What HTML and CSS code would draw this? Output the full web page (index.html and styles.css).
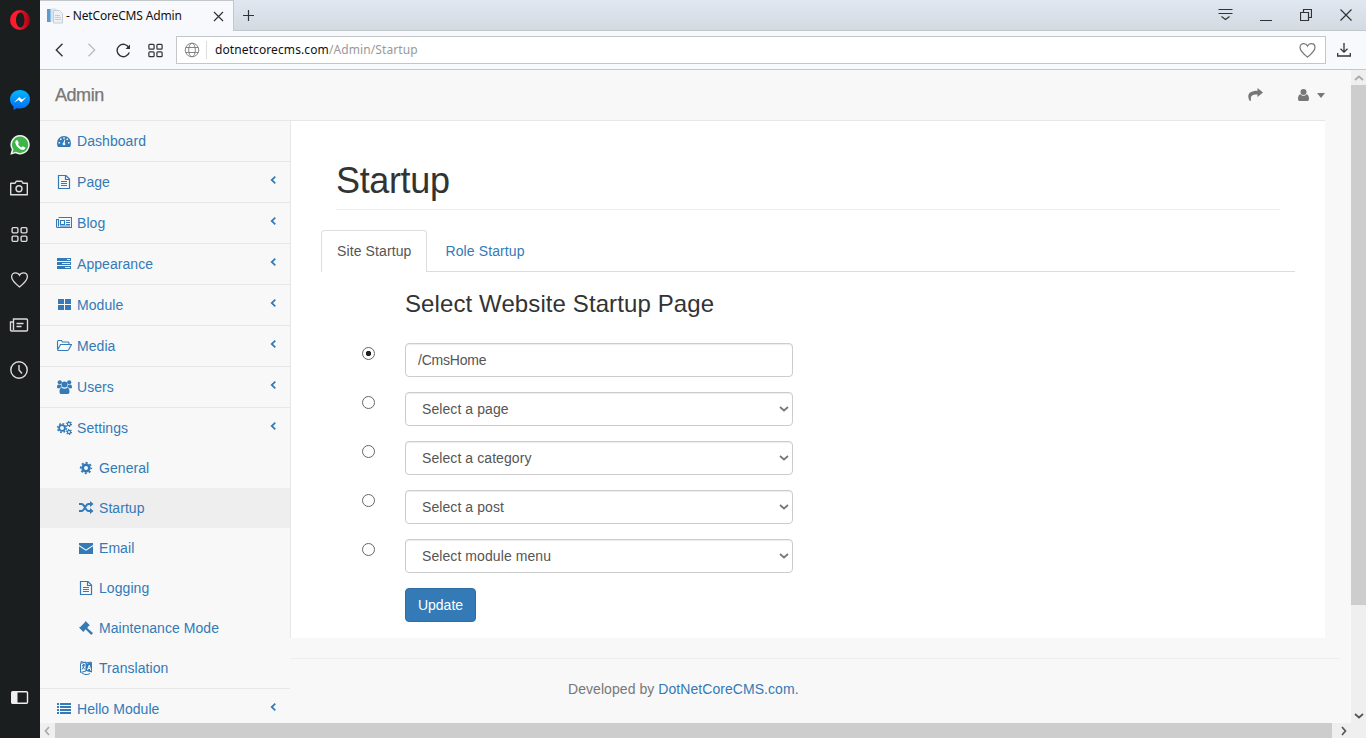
FILE: index.html
```html
<!DOCTYPE html>
<html lang="en">
<head>
<meta charset="utf-8">
<title>- NetCoreCMS Admin</title>
<link rel="stylesheet" href="styles.css">
</head>
<body>
<svg class="defs" width="0" height="0">
  <symbol id="file" viewBox="0 0 16 16"><path d="M2.500 1.500h7.500l3.500 3.500v9.500h-11zM9.500 1.500v4h4" fill="none" stroke="currentColor" stroke-width="1.200"/><path d="M5 7.500h6M5 9.500h6M5 11.500h6" stroke="currentColor"/></symbol>
  <symbol id="grid" viewBox="0 0 18 18"><g fill="none" stroke="currentColor" stroke-width="1.300"><rect x="2" y="2.500" width="5.500" height="5" rx="1"/><rect x="10.500" y="2.500" width="5.500" height="5" rx="1"/><rect x="2" y="10.500" width="5.500" height="5" rx="1"/><rect x="10.500" y="10.500" width="5.500" height="5" rx="1"/></g></symbol>
  <symbol id="heart" viewBox="0 0 18 18"><path d="M9 16C5.500 13.200 1.100 9.600 1.100 5.800C1.100 3.300 2.800 1.800 5 1.800C6.800 1.800 8.300 2.800 9 4.300C9.700 2.800 11.200 1.800 13 1.800C15.200 1.800 16.900 3.300 16.900 5.800C16.900 9.600 12.500 13.200 9 16z" fill="none" stroke="currentColor" stroke-width="1.300"/></symbol>
  <symbol id="chev" viewBox="0 0 6 8"><path d="M5.300.7L1.700 4l3.600 3.300" fill="none" stroke="currentColor" stroke-width="1.700"/></symbol>
  <symbol id="down" viewBox="0 0 10 6"><path d="M1 1l4 3.500L9 1" fill="none" stroke="currentColor" stroke-width="1.700"/></symbol>
</svg>
<div class="browser">
  <aside class="rail">
    <svg class="r-opera" width="20" height="20" viewBox="0 0 20 20"><defs><linearGradient id="og" x2="1"><stop offset=".4" stop-color="#ff1b2d"/><stop offset="1" stop-color="#a70014"/></linearGradient><linearGradient id="mg" x2="0" y2="1"><stop stop-color="#00b8ff"/><stop offset="1" stop-color="#0568f5"/></linearGradient></defs><path fill="url(#og)" fill-rule="evenodd" d="M10 0a10 10 0 100 20a10 10 0 000-20zM10.500 2.500c2.400 0 4 3.200 4 7.500s-1.600 7.500-4 7.500s-4.500-3.200-4.500-7.500s2.100-7.500 4.500-7.500z"/></svg>
    <svg class="r-mess" width="20" height="20" viewBox="0 0 20 20"><path fill="url(#mg)" d="M10 0C4.300 0 0 4.200 0 9.300c0 3 1.300 5.400 3.500 7.200V20l3.300-1.800c1 .3 2.100.4 3.200.4c5.700 0 10-4.200 10-9.300S15.700 0 10 0z"/><path fill="#fff" d="M4 12.500l5.200-5.600 2.700 2.700 4.500-2.500-5 5.500-2.800-2.700z"/></svg>
    <svg class="r-wa" width="20" height="20" viewBox="0 0 20 20"><path fill="#f2f5f2" d="M10.200 0a9.700 9.700 0 00-8.400 14.600L.3 19.800l5.200-1.500A9.700 9.700 0 1010.200 0z"/><path fill="#3db54a" d="M10.200 1.500a8.200 8.200 0 00-6.700 12.900l-1 3.300 3.400-.9A8.200 8.200 0 1010.200 1.500z"/><path fill="#fff" d="M7.200 5c-.7-.2-1.900.8-1.900 2.200 0 3.400 4.300 7.600 7.600 7.600 1.300 0 2.300-.9 2.400-2.300l-2.600-1.300-1.200 1.300c-1.700-.7-2.900-1.900-3.500-3.400l.9-1.200z"/></svg>
    <svg class="r-cam" width="20" height="18" viewBox="0 0 20 18"><path d="M1.700 4.300h4.200l1.300-2h5.600l1.300 2h4.200v11.400h-16.600z" fill="none" stroke="#ddd" stroke-width="1.400" stroke-linejoin="round"/><circle cx="10" cy="9.700" r="3" fill="none" stroke="#ddd" stroke-width="1.400"/></svg>
    <svg class="r-grid" width="19" height="19"><use href="#grid"/></svg>
    <svg class="r-heart" width="19" height="18"><use href="#heart"/></svg>
    <svg class="r-news" width="20" height="16" viewBox="0 0 20 16"><path d="M4.500 2h13q1 0 1 1v10q0 1-1 1h-15q-1 0-1-1V5h3zM4.500 5v8" fill="none" stroke="#ddd" stroke-width="1.400"/><path d="M7.500 6.500h7M7.500 9.500h5" stroke="#ddd" stroke-width="1.400"/></svg>
    <svg class="r-clock" width="20" height="20" viewBox="0 0 20 20"><circle cx="10" cy="10" r="8.200" fill="none" stroke="#ddd" stroke-width="1.400"/><path d="M10 5v5l3 3.500" fill="none" stroke="#ddd" stroke-width="1.400"/></svg>
    <svg class="r-panel" width="19" height="15" viewBox="0 0 19 15"><rect x="1.700" y="1.700" width="15.800" height="11.600" rx="1" fill="none" stroke="#eee" stroke-width="1.400"/><path d="M2 2h5.500v11H2z" fill="#eee"/></svg>
  </aside>
  <div class="window">
    <header class="tabs-bar">
      <div class="tab">
        <svg width="16" height="16" viewBox="0 0 16 16"><path d="M0 1h4v13H0z" fill="#5b9ccf"/><path d="M3.500.5h6v13h-6z" fill="#d5e5f1"/><path d="M6.500 2.500h6l3 3v9.500h-9z" fill="#edf1f4" stroke="#c6ced5"/><path d="M8 7.500h5M8 9.500h6M8 11.500h6" stroke="#c3cdd5"/></svg>
        <span class="tab-title">- NetCoreCMS Admin</span>
        <svg class="tab-x" width="11" height="11" viewBox="0 0 11 11"><path d="M1 1l9 9M10 1l-9 9" stroke="#333" stroke-width="1.200"/></svg>
      </div>
      <svg class="plus" width="11" height="11" viewBox="0 0 11 11"><path d="M5.500 0v11M0 5.500h11" stroke="#333" stroke-width="1.200"/></svg>
      <div class="win-controls">
        <svg width="15" height="14" viewBox="0 0 15 14"><path d="M.5 1.500h14M.5 5.500h14M3.500 8.500l4 3 4-3" fill="none" stroke="#333" stroke-width="1.200"/></svg>
        <svg width="12" height="14" viewBox="0 0 12 14"><path d="M0 12.500h12" stroke="#333"/></svg>
        <svg width="12" height="14" viewBox="0 0 12 14"><path d="M.5 4.500h8v8h-8zM3.500 4v-2.500h8v8H9" fill="none" stroke="#333" stroke-width="1.200"/></svg>
        <svg width="12" height="14" viewBox="0 0 12 14"><path d="M.5 1.500l11 11M11.500 1.500l-11 11" stroke="#333" stroke-width="1.200"/></svg>
      </div>
    </header>
    <nav class="toolbar">
      <svg class="t-back" width="9" height="14" viewBox="0 0 9 14"><path d="M7.500.8L1.300 7l6.200 6.200" fill="none" stroke="#333" stroke-width="1.400"/></svg>
      <svg class="t-fwd" width="9" height="14" viewBox="0 0 9 14"><path d="M1.500.8L7.700 7l-6.200 6.200" fill="none" stroke="#bbb" stroke-width="1.300"/></svg>
      <svg class="t-load" width="15" height="15" viewBox="0 0 15 15"><path d="M12.800 4.600A6.200 6.200 0 1013.200 9.500" fill="none" stroke="#333" stroke-width="1.400"/><path d="M14 1.500v4.500H9.500z" fill="#333"/></svg>
      <svg class="t-grid" width="17" height="17"><use href="#grid"/></svg>
      <div class="address">
        <svg width="16" height="16" viewBox="0 0 16 16" fill="none" stroke="#858585"><circle cx="8" cy="8" r="6.800"/><ellipse cx="8" cy="8" rx="3.300" ry="6.800"/><path d="M1.800 5.500h12.400M1.800 10.500h12.400"/></svg>
        <span class="url">dotnetcorecms.com<i>/Admin/Startup</i></span>
        <svg class="fav" width="17" height="17"><use href="#heart"/></svg>
      </div>
      <svg class="t-dl" width="14" height="14" viewBox="0 0 14 14"><path d="M7 0v9M3.500 5.800L7 9.200l3.500-3.400M.7 10v3h12.600v-3" fill="none" stroke="#333" stroke-width="1.300"/></svg>
    </nav>
    <div class="view">
      <div class="page">
        <div class="navbar"><b class="brand">Admin</b>
          <svg class="share" width="15" height="13" viewBox="0 0 15 13"><path fill="#777" d="M9.500 0l5.500 4.500L9.500 9V6.500C4.500 6.300 2.300 7.500 3 12.800H1.500C-1.500 6.800 1 2.700 9.500 2.700z"/></svg>
          <svg class="user" width="11" height="12" viewBox="0 0 11 12"><circle cx="5.500" cy="3" r="3" fill="#777"/><path fill="#777" d="M2.500 5.200c2 2.200 4 2.200 6 0C10.400 5.700 11 7.500 11 10c0 1.200-.6 2-1.700 2H1.700C.6 12 0 11.200 0 10c0-2.500.6-4.300 2.500-4.800z"/></svg>
          <span class="caret"></span>
        </div>
        <div class="columns">
          <ul class="menu">
            <li><svg class="ic" viewBox="0 0 16 16"><path fill="currentColor" fill-rule="evenodd" d="M8 3a7 7 0 00-7 7c0 1.500.3 2.800.9 4h12.200c.6-1.200.9-2.500.9-4a7 7 0 00-7-7zM7.200 4.300h1.600v1.500H7.200zM4 5.500h1.600V7H4zM10.500 5.500h1.600V7h-1.600zM2.500 9h1.600v1.500H2.500zM12 9h1.600v1.500H12zM8.500 6.500l.8.300-.6 2.900c1 .6 1 2.600-.7 2.600s-2-2-.6-2.700z"/></svg>Dashboard</li>
            <li><svg class="ic"><use href="#file"/></svg>Page<svg class="ar"><use href="#chev"/></svg></li>
            <li><svg class="ic" viewBox="0 0 16 16"><path d="M2.500 2.500h13v10h-14q-1 0-1-1v-7h2v7M4.500 5.500h4v4h-4zM10 5.500h4M10 7.500h4M10 9.500h4M4 11h10" fill="none" stroke="currentColor" stroke-width="1.100"/></svg>Blog<svg class="ar"><use href="#chev"/></svg></li>
            <li><svg class="ic" viewBox="0 0 16 16"><path fill="currentColor" d="M1 2h14v3H1zM1 6h14v3H1zM1 10h14v3H1z"/><path stroke="#f8f8f8" stroke-width=".9" d="M11 3.500h3M6 7.500h8M9 11.500h5"/></svg>Appearance<svg class="ar"><use href="#chev"/></svg></li>
            <li><svg class="ic" viewBox="0 0 16 16"><path fill="currentColor" d="M2 2h6v5H2zM9 2h6v5H9zM2 8h6v5H2zM9 8h6v5H9z"/></svg>Module<svg class="ar"><use href="#chev"/></svg></li>
            <li><svg class="ic" viewBox="0 0 16 16"><path d="M1.500 11V3.500q0-1 1-1h3l1 1.500h5.500q1 0 1 1v1.500M1.500 12l3-5.500h11l-2.700 5q-.6 1-1.800 1H2.500q-1 0-1-1" fill="none" stroke="currentColor" stroke-width="1.100"/></svg>Media<svg class="ar"><use href="#chev"/></svg></li>
            <li><svg class="ic" viewBox="0 0 16 16" fill="currentColor"><circle cx="3.800" cy="3.300" r="2.100"/><circle cx="13.200" cy="3.300" r="2.100"/><circle cx="8.500" cy="5.500" r="3"/><path d="M1 9c0-2.400.6-3.500 1.500-3.500.8.500 1.600.6 2.400.3.100 1.200.5 2 1.200 2.700H4.500L3 9.500zM16 9c0-2.400-.6-3.500-1.500-3.500-.8.500-1.600.6-2.400.3-.1 1.200-.5 2-1.200 2.700h1.600L14 9.500zM5.500 8.700c2 1.400 4 1.400 6 0 1.700.5 2 2.200 2 4 0 1.500-.8 2.300-2 2.300H5.500c-1.200 0-2-.8-2-2.300 0-1.800.3-3.500 2-4z"/></svg>Users<svg class="ar"><use href="#chev"/></svg></li>
            <li class="open"><svg class="ic" viewBox="0 0 16 16" fill="none" stroke="currentColor"><circle cx="6" cy="8" r="2.900" stroke-width="1.800"/><circle cx="6" cy="8" r="4.400" stroke-width="1.500" stroke-dasharray="1.730 1.730"/><circle cx="13" cy="4" r="1.600" stroke-width="1.200"/><circle cx="13" cy="4" r="2.500" stroke-width="1.200" stroke-dasharray="1.200 1.420"/><circle cx="13" cy="12" r="1.600" stroke-width="1.200"/><circle cx="13" cy="12" r="2.500" stroke-width="1.200" stroke-dasharray="1.200 1.420"/></svg>Settings<svg class="ar"><use href="#chev"/></svg></li>
            <li class="sub"><svg class="ic" viewBox="0 0 16 16" fill="none" stroke="currentColor"><circle cx="8" cy="8" r="3.300" stroke-width="2.600"/><circle cx="8" cy="8" r="5.200" stroke-width="1.900" stroke-dasharray="2.042 2.042" stroke-dashoffset="1"/></svg>General</li>
            <li class="sub active"><svg class="ic" viewBox="0 0 16 16"><path d="M1 4h2.500C7 4 7 11 10.500 11H13M1 11h2.500C7 11 7 4 10.500 4H13" fill="none" stroke="currentColor" stroke-width="1.900"/><path fill="currentColor" d="M12 1l3.500 3L12 7zM12 8l3.500 3L12 14z"/></svg>Startup</li>
            <li class="sub"><svg class="ic" viewBox="0 0 16 16"><path fill="currentColor" d="M1 3h14v2L8 9.500 1 5zM1 6.300l7 4.500 7-4.500V14H1z"/></svg>Email</li>
            <li class="sub"><svg class="ic"><use href="#file"/></svg>Logging</li>
            <li class="sub"><svg class="ic" viewBox="0 0 16 16"><path fill="currentColor" d="M7.500 1l4.300 4.300-1.400.9-1.200 1.700 5.800 5-1.800 2.100-5.700-5.700-1 1.500L5.300 12 1 7.500l1.500-.8 4-4z"/></svg>Maintenance Mode</li>
            <li class="sub"><svg class="ic" viewBox="0 0 16 16"><path d="M2.500 3.500L8 2v9l-5.500 1.500z" fill="none" stroke="currentColor"/><path fill="currentColor" d="M8 4l6-2v10.500L8 11z"/><path d="M4 5.500l3-.8M5.500 4v2M6.500 5.500L4 9.500M4.500 6.500l2.500 3" stroke="currentColor" fill="none"/><path d="M9.500 10l1.800-5 1.500 5.600M10 8.500h2" stroke="#fff" fill="none"/><path d="M4 13c3 2 5 2 8 .5M3 3V1.500L8 3l5-1" fill="none" stroke="currentColor"/></svg>Translation</li>
            <li class="last"><svg class="ic" viewBox="0 0 16 16"><path fill="currentColor" d="M1 2h2v2H1zM4 2h11v2H4zM1 5h2v2H1zM4 5h11v2H4zM1 8h2v2H1zM4 8h11v2H4zM1 11h2v2H1zM4 11h11v2H4z"/></svg>Hello Module<svg class="ar"><use href="#chev"/></svg></li>
          </ul>
          <div class="right">
            <main class="content">
              <h1>Startup</h1>
              <div class="tabs"><span class="on">Site Startup</span><span>Role Startup</span></div>
              <form class="form">
                <h3>Select Website Startup Page</h3>
                <div class="row"><input type="radio" name="s" checked><input class="field path" type="text" value="/CmsHome"></div>
                <div class="row"><input type="radio" name="s"><div class="pick"><select class="field"><option>Select a page</option></select><svg><use href="#down"/></svg></div></div>
                <div class="row"><input type="radio" name="s"><div class="pick"><select class="field"><option>Select a category</option></select><svg><use href="#down"/></svg></div></div>
                <div class="row"><input type="radio" name="s"><div class="pick"><select class="field"><option>Select a post</option></select><svg><use href="#down"/></svg></div></div>
                <div class="row"><input type="radio" name="s"><div class="pick"><select class="field"><option>Select module menu</option></select><svg><use href="#down"/></svg></div></div>
                <button type="button">Update</button>
              </form>
            </main>
            <footer>Developed by <a>DotNetCoreCMS.com.</a></footer>
          </div>
        </div>
      </div>
      <div class="vbar"><svg class="up" width="10" height="6"><use href="#down"/></svg><div class="vthumb"></div><svg width="10" height="6"><use href="#down"/></svg></div>
    </div>
    <div class="hbar"><svg class="lt" width="10" height="6"><use href="#down"/></svg><div class="hthumb"></div><svg class="rt" width="10" height="6"><use href="#down"/></svg></div>
  </div>
</div>
</body>
</html>
```
FILE: styles.css
```css
* { box-sizing: border-box; }
body { margin: 0; font: 14px/20px "Liberation Sans", Arial, sans-serif; color: #333; overflow: hidden; }
svg { display: block; flex: none; }
.defs { position: absolute; }
.browser { display: flex; width: 1366px; height: 738px; }

.rail { width: 40px; background: #1b1e1f; color: #ddd; display: flex; flex-direction: column; align-items: flex-start; padding: 10px 0 33px 10px; }
.r-mess { margin-top: 60px; }
.r-wa { margin-top: 25px; }
.r-cam { margin: 24px 0 0 -1px; }
.r-grid { margin-top: 28px; }
.r-heart { margin: 27px 0 0 0; }
.r-news { margin: 28px 0 0 -1px; }
.r-clock { margin: 27px 0 0 -1px; }
.r-panel { margin-top: auto; }

.window { flex: 1; min-width: 0; display: flex; flex-direction: column; }
.tabs-bar { height: 31px; display: flex; background: linear-gradient(#e0e7f0, #d3dae2); border-bottom: 1px solid #c4c7ca; }
.tab { width: 194px; height: 31px; display: flex; align-items: center; padding: 0 9px 0 7px; background: #f8f9fc; border-top: 1px solid #c4c7ca; border-right: 1px solid #c4c7ca; }
.tab-title { font: 12px/16px "Noto Sans", sans-serif; letter-spacing: -.15px; color: #111; margin-left: 3px; white-space: nowrap; }
.tab-x { margin-left: auto; }
.plus { margin: 10px 0 0 9px; }
.win-controls { margin: 8px 14px 0 auto; display: flex; gap: 28px; }
.win-controls svg:first-child { margin-right: -1px; }

.toolbar { height: 39px; background: #f8f9fc; border-bottom: 1px solid #c4c7ca; display: flex; align-items: center; padding: 0 15px; color: #333; }
.t-fwd { margin-left: 23px; }
.t-load { margin-left: 20px; }
.t-grid { margin-left: 16px; }
.address { flex: 1; height: 28px; margin: 0 11px 0 12px; background: #fff; border: 1px solid #c4c7ca; display: flex; align-items: center; padding: 0 9px 0 7px; }
.url { font: 12px/18px "Noto Sans", sans-serif; color: #111; margin-left: 6px; padding-left: 8px; border-left: 1px solid #ddd; letter-spacing: .1px; }
.url i { font-style: normal; color: #999; }
.fav { margin-left: auto; color: #777; }

.view { height: 653px; display: flex; overflow: hidden; }
.page { width: 1311px; height: 653px; overflow: hidden; background: #f8f8f8; letter-spacing: .06px; }
.navbar { width: 1285px; height: 51px; border-bottom: 1px solid #e7e7e7; display: flex; align-items: center; padding-left: 15px; }
.brand { font-size: 18px; font-weight: 400; color: #777; letter-spacing: -.45px; -webkit-text-stroke: .25px #777; }
.share { margin: 0 0 2px auto; }
.user { margin-left: 35px; }
.caret { border: 4px solid transparent; border-top: 5px solid #777; border-bottom: 0; margin: 0 0 0 8px; }
.columns { display: flex; }

.menu { list-style: none; margin: 0; padding: 0; width: 250px; color: #337ab7; }
.menu li { height: 41px; border-bottom: 1px solid #e7e7e7; display: flex; align-items: center; padding: 0 14px 0 16px; }
.menu .open { height: 40px; border: 0; }
.menu .sub { height: 40px; border: 0; padding-left: 38px; }
.menu .active { background: #eee; }
.menu .last { border-top: 1px solid #e7e7e7; height: 42px; }
.ic { width: 16px; height: 16px; margin-right: 5px; }
.ar { width: 6px; height: 8px; margin: 0 0 5px auto; }

.right { width: 1050px; }
.content { width: 1035px; height: 517px; background: #fff; border-left: 1px solid #e7e7e7; padding: 40px 30px 0; }
h1 { margin: 0 15px 20px; padding-left: 0; height: 49px; border-bottom: 1px solid #eee; font: 36px/40px "Liberation Sans", Arial, sans-serif; letter-spacing: -.35px; }
.tabs { display: flex; gap: 2px; height: 42px; border-bottom: 1px solid #ddd; }
.tabs span { height: 42px; padding: 11px 15px; line-height: 20px; color: #337ab7; border: solid transparent; border-width: 0 1px; letter-spacing: .11px; }
.tabs .on { border: 1px solid #ddd; border-bottom: 0; border-radius: 4px 4px 0 0; background: #fff; color: #555; padding-top: 10px; }
.form { padding-left: 41px; }
h3 { font: 24px/26px "Liberation Sans", Arial, sans-serif; margin: 19px 0 26px 43px; letter-spacing: .1px; }
.row { display: flex; gap: 30px; height: 34px; margin-bottom: 15px; }
.row input[type=radio] { appearance: none; width: 13px; height: 13px; margin: 4px 0 0; border: 1px solid #666; border-radius: 50%; }
.row input[type=radio]:checked { background: radial-gradient(circle, #222 2.300px, transparent 3px); }
.field { appearance: none; display: block; width: 388px; height: 34px; padding: 6px 12px; font: inherit; letter-spacing: .08px; color: #555; background: #fff; border: 1px solid #ccc; border-radius: 4px; box-shadow: inset 0 1px 1px rgba(0,0,0,.075); }
.path { letter-spacing: -.2px; }
.pick { position: relative; }
.pick .field { padding-left: 16px; }
.pick svg { position: absolute; right: 4px; top: 14px; width: 10px; height: 6px; color: #777; }
button { margin-left: 43px; display: block; width: 71px; height: 34px; padding: 0; font: inherit; color: #fff; background: #337ab7; border: 1px solid #2e6da4; border-radius: 4px; }
footer { margin-top: 20px; border-top: 1px solid #eee; padding: 20px 0 0 278px; color: #777; }
footer a { color: #337ab7; }

.vbar { width: 15px; background: #efefef; display: flex; flex-direction: column; align-items: center; padding: 5px 0 4px; color: #555; justify-content: space-between; }
.vthumb { width: 15px; height: 520px; margin: 4px 0 auto; background: #cdcdcd; }
.up { transform: rotate(180deg); color: #aaa; }
.hbar { height: 15px; background: #efefef; display: flex; align-items: center; padding: 0 0 0 2px; color: #555; }
.hthumb { flex: none; width: 1277px; height: 15px; margin-left: 3px; background: #cdcdcd; }
.lt { transform: rotate(90deg); color: #aaa; }
.rt { transform: rotate(-90deg); margin-left: 7px; }
```
